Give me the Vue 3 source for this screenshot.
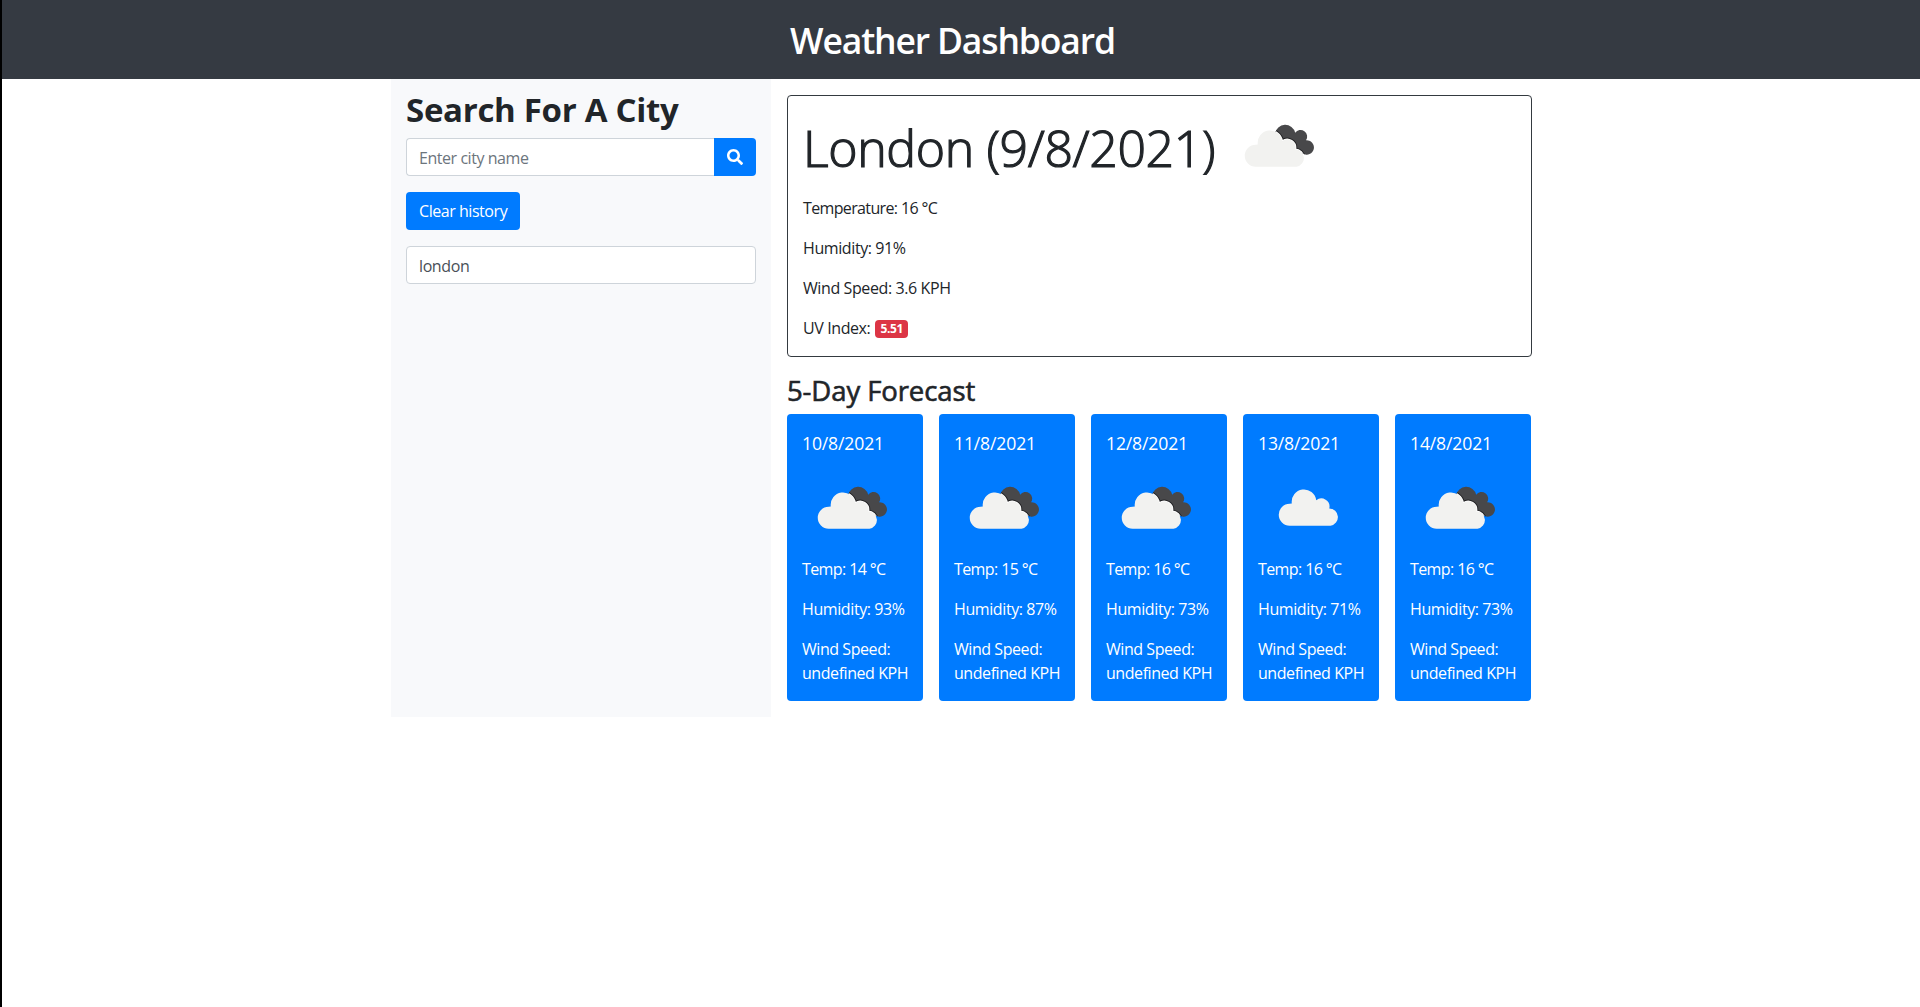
<script setup>
const days = [
  { date: '10/8/2021', temp: 14, humidity: 93, icon: 'broken' },
  { date: '11/8/2021', temp: 15, humidity: 87, icon: 'broken' },
  { date: '12/8/2021', temp: 16, humidity: 73, icon: 'broken' },
  { date: '13/8/2021', temp: 16, humidity: 71, icon: 'cloud' },
  { date: '14/8/2021', temp: 16, humidity: 73, icon: 'broken' },
]
const cloud =
  'M25.700 71.700A10.900 10.900 0 0 1 25.700 49.800L27.800 49.400A12.200 12.200 0 0 1 52.200 46.200A8.200 8.200 0 0 1 65.300 54.400A8.700 8.700 0 0 1 66.500 71.700Z'
const backCloud =
  'M45 38.500A10.300 10.300 0 0 1 65.200 37.800A6.300 6.300 0 0 1 76 45.300A7.200 7.200 0 1 1 73 58.600L60 66L45 50Z'
</script>

<template>
  <div class="page">
    <header class="top"><h1>Weather Dashboard</h1></header>
    <main class="container">
      <aside class="side">
        <h2>Search For A City</h2>
        <form class="search" @submit.prevent>
          <input type="text" placeholder="Enter city name" />
          <button type="submit" aria-label="Search">
            <svg viewBox="0 0 512 512" width="16" height="16">
              <path fill="#fff" d="M505 442.700L405.300 343c-4.500-4.500-10.600-7-17-7H372c27.600-35.300 44-79.700 44-128C416 93.100 322.900 0 208 0S0 93.100 0 208s93.100 208 208 208c48.300 0 92.700-16.400 128-44v16.300c0 6.400 2.500 12.500 7 17l99.700 99.700c9.400 9.400 24.600 9.400 33.900 0l28.300-28.300c9.400-9.400 9.400-24.600.1-34zM208 336c-70.700 0-128-57.200-128-128 0-70.700 57.200-128 128-128 70.700 0 128 57.200 128 128 0 70.700-57.200 128-128 128z" />
            </svg>
          </button>
        </form>
        <button class="clear" type="button"><span>Clear history</span></button>
        <div class="entry">london</div>
      </aside>
      <section class="content">
        <article class="current">
          <div class="city">
            <h2>London (9/8/2021)</h2>
            <svg viewBox="0 0 100 100" width="100" height="100">
              <clipPath id="back-now"><path :d="backCloud" /></clipPath>
              <path :d="backCloud" fill="#48484a" />
              <g clip-path="url(#back-now)" fill="none">
                <path :d="cloud" stroke="#222224" stroke-width="3.400" />
                <path :d="cloud" stroke="#fff" stroke-width="1.600" />
              </g>
              <path :d="cloud" fill="#f2f2f0" />
            </svg>
          </div>
          <p class="temperature">Temperature: 16 °C</p>
          <p>Humidity: 91%</p>
          <p>Wind Speed: 3.6 KPH</p>
          <p>UV Index: <span class="badge">5.51</span></p>
        </article>
        <h3>5-Day Forecast</h3>
        <div class="days">
          <article v-for="day in days" :key="day.date" class="day">
            <h5>{{ day.date }}</h5>
            <svg viewBox="0 0 100 100" width="100" height="100">
              <template v-if="day.icon === 'broken'">
                <clipPath :id="'back-' + day.date.slice(0, 2)"><path :d="backCloud" /></clipPath>
                <path :d="backCloud" fill="#48484a" />
                <g :clip-path="'url(#back-' + day.date.slice(0, 2) + ')'" fill="none">
                  <path :d="cloud" stroke="#222224" stroke-width="3.400" />
                  <path :d="cloud" stroke="#fff" stroke-width="1.600" />
                </g>
                <path :d="cloud" fill="#f2f2f0" />
              </template>
              <path v-else :d="cloud" fill="#f2f2f0" transform="translate(5 -3)" />
            </svg>
            <p class="temp">Temp: {{ day.temp }} °C</p>
            <p>Humidity: {{ day.humidity }}%</p>
            <p class="wind">Wind Speed:<br />undefined KPH</p>
          </article>
        </div>
      </section>
    </main>
  </div>
</template>

<style>
body { background: #fff; }
</style>

<style scoped>
* { box-sizing: border-box; }
.page {
  min-height: 1007px;
  border-left: 2px solid #000;
  font: 400 16px/24px "Open Sans", "Noto Sans", sans-serif;
  letter-spacing: -0.4px;
  color: #212529;
}
h1, h2, h3, h5, p { margin: 0; white-space: nowrap; }
.top {
  height: 79px;
  background: #353a42;
  color: #fff;
  display: flex;
  align-items: center;
  padding: 1px 0 0 788px;
}
.top h1 { font-size: 35.500px; line-height: 48px; font-weight: 600; letter-spacing: -1.150px; }
.container { width: 1140px; margin: 0 auto; display: flex; }
.side { width: 380px; height: 638px; background: #f8f9fb; padding: 9px 15px 0; }
.side h2 { font-size: 33px; line-height: 43px; height: 50px; font-weight: 700; letter-spacing: -0.290px; }
.search { display: flex; height: 38px; margin-bottom: 16px; }
input {
  flex: 1;
  min-width: 0;
  border: 1px solid #ced4da;
  border-right: 0;
  border-radius: 4px 0 0 4px;
  padding: 2px 12px 0;
  font: inherit;
  letter-spacing: -0.450px;
  background: #fff;
}
input::placeholder { color: #6c757d; opacity: 1; }
.search button {
  width: 42px;
  border: 0;
  border-radius: 0 4px 4px 0;
  background: #007bff;
  padding: 0;
  display: flex;
  align-items: center;
  justify-content: center;
}
.clear {
  display: block;
  width: 114px;
  height: 38px;
  margin-bottom: 16px;
  border: 0;
  border-radius: 4px;
  padding: 0 0 0 13px;
  text-align: left;
  background: #007bff;
  color: #fff;
  font: inherit;
  letter-spacing: -0.450px;
  white-space: nowrap;
}
.entry {
  height: 38px;
  border: 1px solid #ced4da;
  border-radius: 4px;
  padding: 7px 12px;
  background: #fff;
  color: #495057;
}
.content { width: 760px; padding: 16px 0 0 16px; }
.current { width: 745px; height: 262px; border: 1px solid #343a40; border-radius: 4px; padding: 0 15px; }
.city { display: flex; height: 100px; }
.city h2 {
  width: 427px;
  font-size: 50px;
  line-height: 105px;
  font-weight: 300;
  letter-spacing: -0.380px;
  -webkit-text-stroke: 1.150px #212529;
}
.city svg { flex: none; margin-top: -1px; }
.current p, .day p { margin-bottom: 16px; }
.current .temperature { letter-spacing: -0.640px; }
.badge {
  display: inline-block;
  height: 18px;
  width: 33px;
  margin-left: 1px;
  vertical-align: 1px;
  border-radius: 4px;
  background: #dc3545;
  color: #fff;
  font-size: 12px;
  line-height: 18px;
  font-weight: 700;
  text-align: center;
}
h3 {
  margin-top: 16px;
  height: 41px;
  font-size: 27.500px;
  line-height: 36px;
  font-weight: 400;
  letter-spacing: -0.100px;
  -webkit-text-stroke: 0.600px #212529;
}
.days { display: flex; gap: 16px; }
.day { width: 136px; height: 287px; background: #007bff; border-radius: 4px; color: #fff; padding: 16px 0 0 15px; }
.day h5 { font-size: 17.600px; line-height: 27px; font-weight: 400; letter-spacing: -0.150px; }
.day svg { display: block; margin-left: 1px; }
.day .temp { letter-spacing: -0.600px; }
.day .wind { letter-spacing: -0.440px; }
</style>
